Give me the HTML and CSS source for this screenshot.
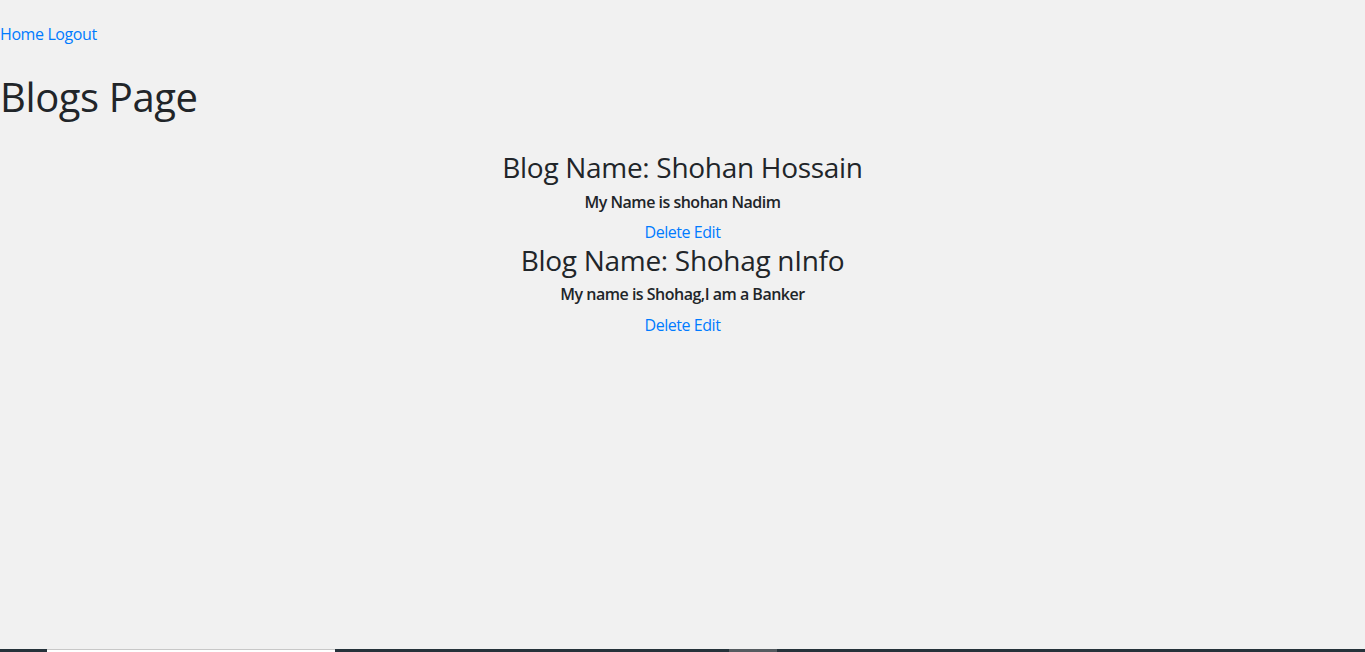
FILE: index.html
```html
<!DOCTYPE html>
<html>
<head>
<meta charset="utf-8">
<link rel="stylesheet" href="styles.css">
</head>
<body>
<div class="page">
  <nav class="nav"><a href="#">Home</a> <a href="#">Logout</a></nav>
  <h1 class="title">Blogs Page</h1>
  <div class="blogs">
    <div class="blog">
      <h3 class="blog-name">Blog Name: Shohan Hossain</h3>
      <h6 class="blog-body">My Name is shohan Nadim</h6>
      <div class="actions"><a href="#">Delete</a> <a href="#">Edit</a></div>
    </div>
    <div class="blog">
      <h3 class="blog-name">Blog Name: Shohag nInfo</h3>
      <h6 class="blog-body">My name is Shohag,I am a Banker</h6>
      <div class="actions"><a href="#">Delete</a> <a href="#">Edit</a></div>
    </div>
  </div>
</div>
<div class="taskbar">
  <div class="tb-left"></div>
  <div class="tb-input"></div>
  <div class="tb-mid"></div>
  <div class="tb-active"></div>
  <div class="tb-rest"></div>
</div>
</body>
</html>
```
FILE: styles.css
```css
html, body {
  margin: 0;
  padding: 0;
  height: 100%;
}
body {
  background: #f1f1f1;
  color: #212529;
  font-family: "Open Sans", "Noto Sans", sans-serif;
  font-size: 16px;
  line-height: 1.5;
  display: flex;
  flex-direction: column;
}
.page {
  flex: 1;
}
a {
  color: #007bff;
  text-decoration: none;
}
.nav {
  padding-top: 22px;
  line-height: 24px;
  letter-spacing: -0.4px;
}
.title {
  margin: 27px 0 30px;
  font-size: 40px;
  font-weight: 500;
  line-height: 1.2;
  letter-spacing: -0.4px;
}
.blogs {
  text-align: center;
}
.blog-name {
  margin: 0 0 8px;
  font-size: 28px;
  font-weight: 500;
  line-height: 1.2;
  letter-spacing: -0.3px;
}
.blog-body {
  margin: 0 0 8px;
  font-size: 16px;
  font-weight: 600;
  line-height: 1.2;
  letter-spacing: -0.5px;
}
.actions {
  line-height: 24px;
  letter-spacing: -0.45px;
}
.taskbar {
  height: 3px;
  display: flex;
  background: #25323a;
}
.tb-left { width: 47px; }
.tb-input { width: 288px; background: #ffffff; border-top: 1px solid #c8c8c8; box-sizing: border-box; }
.tb-mid { width: 394px; }
.tb-active { width: 48px; background: #555b60; }
.tb-rest { flex: 1; }
```
